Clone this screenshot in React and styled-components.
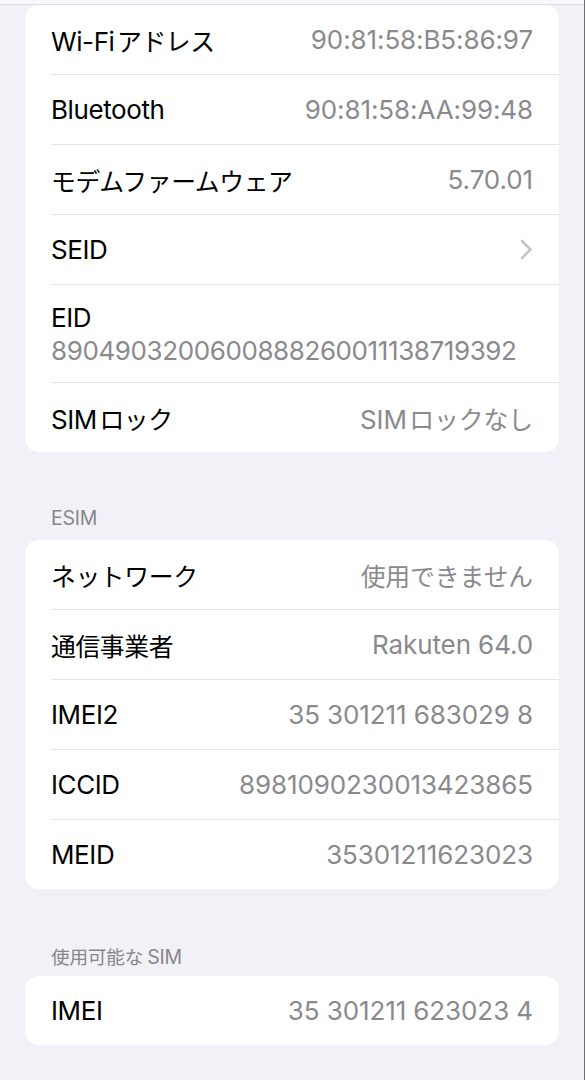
import React from "react";
import styled, { createGlobalStyle } from "styled-components";

const GlobalStyle = createGlobalStyle`
    html, body {
        margin: 0;
        padding: 0;
        background: #f2f1f7;
    }
    body {
        font-family: Inter, "Noto Sans CJK JP", "Noto Sans", sans-serif;
        -webkit-font-smoothing: antialiased;
    }
`;

const sections = [
    {
        title: null,
        rows: [
            { label: "Wi-Fiアドレス", value: "90:81:58:B5:86:97" },
            { label: "Bluetooth", value: "90:81:58:AA:99:48" },
            { label: "モデムファームウェア", value: "5.70.01" },
            { label: "SEID", chevron: true },
            { label: "EID", value: "8904903200600888260011138719392", stacked: true },
            { label: "SIMロック", value: "SIMロックなし" },
        ],
    },
    {
        title: "ESIM",
        rows: [
            { label: "ネットワーク", value: "使用できません" },
            { label: "通信事業者", value: "Rakuten 64.0" },
            { label: "IMEI2", value: "35 301211 683029 8" },
            { label: "ICCID", value: "8981090230013423865" },
            { label: "MEID", value: "35301211623023" },
        ],
    },
    {
        title: "使用可能なSIM",
        rows: [{ label: "IMEI", value: "35 301211 623023 4" }],
    },
];

const CJK = /[\u3000-\u9fff\uff00-\uffef]/;

// 일본어 부분만 살짝 작게 + 영문과 사이 간격 (iOS 렌더링 흉내)
function Mixed({ text }) {
    const parts = text.split(/([\u3000-\u9fff\uff00-\uffef]+)/).filter(Boolean);
    return parts.map((part, i) =>
        CJK.test(part)
            ? <Jp key={i} before={i > 0} after={i < parts.length - 1}>{part}</Jp>
            : part
    );
}

function Chevron() {
    return (
        <svg width="13" height="21" viewBox="0 0 13 21" fill="none">
            <path d="M2 2 L10.5 10.5 L2 19" stroke="#c4c4c7" strokeWidth="2.6" strokeLinecap="round" strokeLinejoin="round" />
        </svg>
    );
}

function App() {
    return (
        <Screen>
            <GlobalStyle />
            <NavEdge />
            <Content>
                {sections.map((section, si) => (
                    <Section key={si} gap={si === 0 ? 0 : si === 1 ? 52 : 51}>
                        {section.title && <SectionTitle><Mixed text={section.title} /></SectionTitle>}
                        <Card>
                            {section.rows.map((row, ri) =>
                                row.stacked ? (
                                    <StackedRow key={ri}>
                                        <Label>{row.label}</Label>
                                        <StackedValue>{row.value}</StackedValue>
                                    </StackedRow>
                                ) : (
                                    <Row key={ri} first={ri === 0}>
                                        <Label><Mixed text={row.label} /></Label>
                                        {row.chevron ? <Chevron /> : <Value><Mixed text={row.value} /></Value>}
                                    </Row>
                                )
                            )}
                        </Card>
                    </Section>
                ))}
            </Content>
        </Screen>
    );
}

const Screen = styled.div`
    width: 585px;
    height: 1080px;
    background: #f2f1f7;
    border-right: 1px solid #6e6e72;
    box-sizing: border-box;
    overflow: hidden;
    display: flex;
    flex-direction: column;
`;

const NavEdge = styled.div`
    height: 4px;
    flex-shrink: 0;
    background: #f8f8fa;
    border-bottom: 1px solid #dcdce0;
`;

const Content = styled.div`
    display: flex;
    flex-direction: column;
    padding: 0 25px 0 25px;
`;

const Section = styled.div`
    display: flex;
    flex-direction: column;
    margin-top: ${props => props.gap}px;
`;

const Jp = styled.span`
    font-size: 0.955em;
    margin-left: ${props => props.before ? "0.1em" : "0"};
    margin-right: ${props => props.after ? "0.22em" : "0"};
`;

const SectionTitle = styled.div`
    box-sizing: border-box;
    height: 36px;
    padding: 2px 0 0 26px;
    font-size: 19.5px;
    color: #86868b;
    letter-spacing: -0.2px;
`;

const Card = styled.div`
    background: #ffffff;
    border-radius: 14px;
    display: flex;
    flex-direction: column;
    padding-left: 26px;
`;

const Row = styled.div`
    box-sizing: border-box;
    height: ${props => props.first ? 69 : 70}px;
    display: flex;
    align-items: center;
    justify-content: space-between;
    padding-right: 26px;
    border-top: ${props => props.first ? "none" : "1px solid #e4e4e8"};
`;

const StackedRow = styled.div`
    box-sizing: border-box;
    height: 98px;
    display: flex;
    flex-direction: column;
    justify-content: center;
    gap: 2px;
    border-top: 1px solid #e4e4e8;
`;

const Label = styled.span`
    font-size: 26px;
    color: #000000;
    letter-spacing: -0.4px;
    white-space: nowrap;
`;

const Value = styled.span`
    font-size: 26px;
    color: #8a8a8e;
    letter-spacing: -0.1px;
    white-space: nowrap;
`;

const StackedValue = styled.span`
    font-size: 26px;
    color: #8a8a8e;
    letter-spacing: -0.4px;
`;

export default App;
